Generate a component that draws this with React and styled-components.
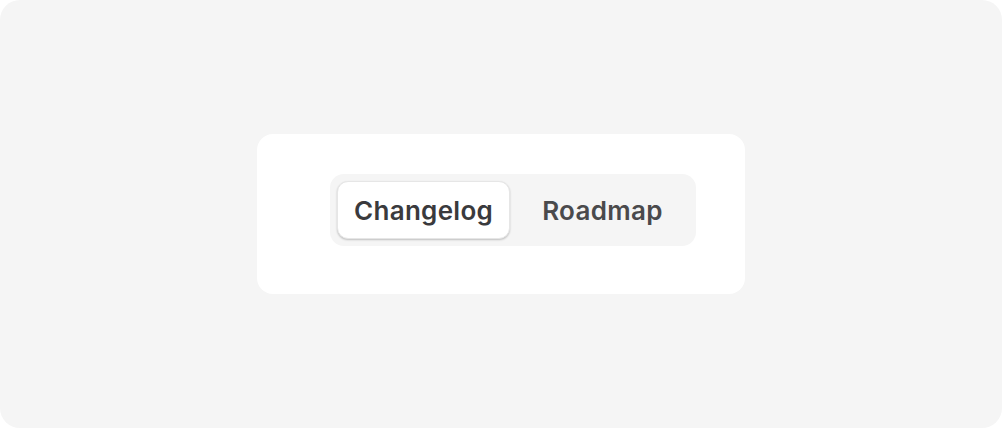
import React, {useState} from 'react';
import styled, {createGlobalStyle} from 'styled-components';

const GlobalStyle = createGlobalStyle`
    html, body {
        margin: 0;
        padding: 0;
        background: #ffffff;
    }
    body {
        font-family: Inter, "Noto Sans", "Liberation Sans", sans-serif;
    }
`

const App = () =>{
    const [active, setActive] = useState('changelog');

    return(
        <>
            <GlobalStyle />
            <Page>
                <Card>
                    <Segmented>
                        <Segment
                            className={active === 'changelog' ? 'is-active' : ''}
                            onClick={() => setActive('changelog')}
                        >Changelog</Segment>
                        <Segment
                            className={active === 'roadmap' ? 'is-active' : ''}
                            onClick={() => setActive('roadmap')}
                        >Roadmap</Segment>
                    </Segmented>
                </Card>
            </Page>
        </>
    )
}

const Page = styled.div`
    width: 1002px;
    height: 428px;
    box-sizing: border-box;
    background-color: #f5f5f5;
    border-radius: 20px;
    display: flex;
    align-items: center;
    justify-content: center;
`

const Card = styled.div`
    width: 488px;
    height: 160px;
    box-sizing: border-box;
    padding: 40px 49px 0 73px;
    background-color: #ffffff;
    border-radius: 16px;
    display: flex;
    align-items: flex-start;
`

const Segmented = styled.div`
    display: flex;
    align-items: center;
    gap: 15px;
    width: 366px;
    height: 72px;
    box-sizing: border-box;
    padding: 7px;
    background-color: #f5f5f5;
    border-radius: 14px;
`

const Segment = styled.button`
    height: 58px;
    box-sizing: border-box;
    padding: 0 16px;
    border: 1px solid transparent;
    border-radius: 11px;
    background: transparent;
    font-family: Inter, "Noto Sans", "Liberation Sans", sans-serif;
    font-size: 26px;
    font-weight: 600;
    letter-spacing: 0.3px;
    color: #4a4a4c;
    cursor: pointer;

    &.is-active{
        background-color: #ffffff;
        border-color: #e6e6e6;
        color: #3a3a3d;
        box-shadow: 0 1px 2px rgba(0, 0, 0, 0.22);
    }
`

export default App;
